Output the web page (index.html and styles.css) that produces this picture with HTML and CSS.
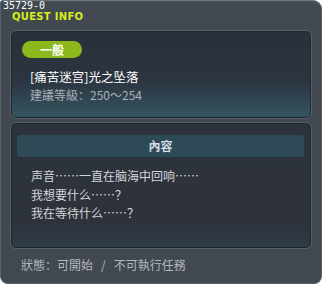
FILE: index.html
```html
<!DOCTYPE html>
<html>
<head lang="zh">
    <meta charset="UTF-8">
    <title>Quest Info</title>
    <link rel="stylesheet" href="styles.css">
</head>
<body>

<div class="window">
    <div class="quest-id">35729-0</div>
    <div class="title">QUEST INFO</div>

    <!--任务信息-->
    <div class="panel panel-info">
        <span class="badge">一般</span>
        <p class="quest-name">[痛苦迷宫]光之坠落</p>
        <p class="quest-level">建議等級：250～254</p>
    </div>

    <!--内容-->
    <div class="panel panel-content">
        <div class="content-head">內容</div>
        <p>声音……一直在脑海中回响……</p>
        <p>我想要什么……？</p>
        <p>我在等待什么……？</p>
    </div>

    <div class="status">狀態：可開始<span class="slash">/</span>不可執行任務</div>
</div>

</body>
</html>
```

FILE: styles.css
```css
body, p {
    margin: 0;
    padding: 0;
}

body {
    background: #ffffff;
    font-family: "Noto Sans CJK SC", "DejaVu Sans", sans-serif;
}

.window {
    width: 322px;
    height: 284px;
    box-sizing: border-box;
    padding: 0 9px 0 9px;
    background: #41484f;
    border: 1px solid #59616a;
    border-top-color: #6a727b;
    border-radius: 3px 9px 8px 8px;
    box-shadow: inset 0 1px 0 #4c535b;
}

.quest-id {
    margin-left: -7px;
    height: 10px;
    font: 10px/10px "DejaVu Sans Mono", monospace;
    color: #ffffff;
}

.title {
    margin-left: 2px;
    height: 19px;
    font: bold 10px/11px "DejaVu Sans", sans-serif;
    color: #d8ee1c;
    letter-spacing: 0.3px;
}

.panel {
    box-sizing: border-box;
    border: 1px solid #59626c;
    border-radius: 6px;
    box-shadow: inset 0 0 0 1px #20252c;
}

.panel-info {
    height: 89px;
    padding: 10px 11px 0 11px;
    background: linear-gradient(#2a303a 0%, #2b343f 55%, #355560 100%);
}

.badge {
    display: block;
    width: 60px;
    height: 17px;
    border-radius: 9px;
    background: #8db81c;
    color: #ffffff;
    font-size: 12px;
    font-weight: bold;
    line-height: 17px;
    text-align: center;
}

.quest-name {
    margin: 10px 0 0 8px;
    font-size: 12.5px;
    line-height: 17px;
    color: #ffffff;
}

.quest-level {
    margin: 2px 0 0 8px;
    font-size: 12px;
    line-height: 16px;
    color: #a8b0b8;
}

.panel-content {
    height: 127px;
    margin-top: 3px;
    padding: 12px 7px 0 6px;
    background: linear-gradient(#2d333c 0%, #2d323b 80%, #2d3c46 100%);
}

.content-head {
    height: 22px;
    margin-bottom: 10px;
    border-radius: 3px;
    background: #2f4a57;
    color: #d4dde2;
    font-size: 12px;
    font-weight: bold;
    line-height: 22px;
    text-align: center;
}

.panel-content p {
    margin-left: 14px;
    font-size: 12px;
    line-height: 18.5px;
    color: #d2d6da;
}

.status {
    margin: 8px 0 0 11px;
    font-size: 12px;
    line-height: 16px;
    color: #b2b8be;
}

.status .slash {
    margin: 0 8px;
}
```
